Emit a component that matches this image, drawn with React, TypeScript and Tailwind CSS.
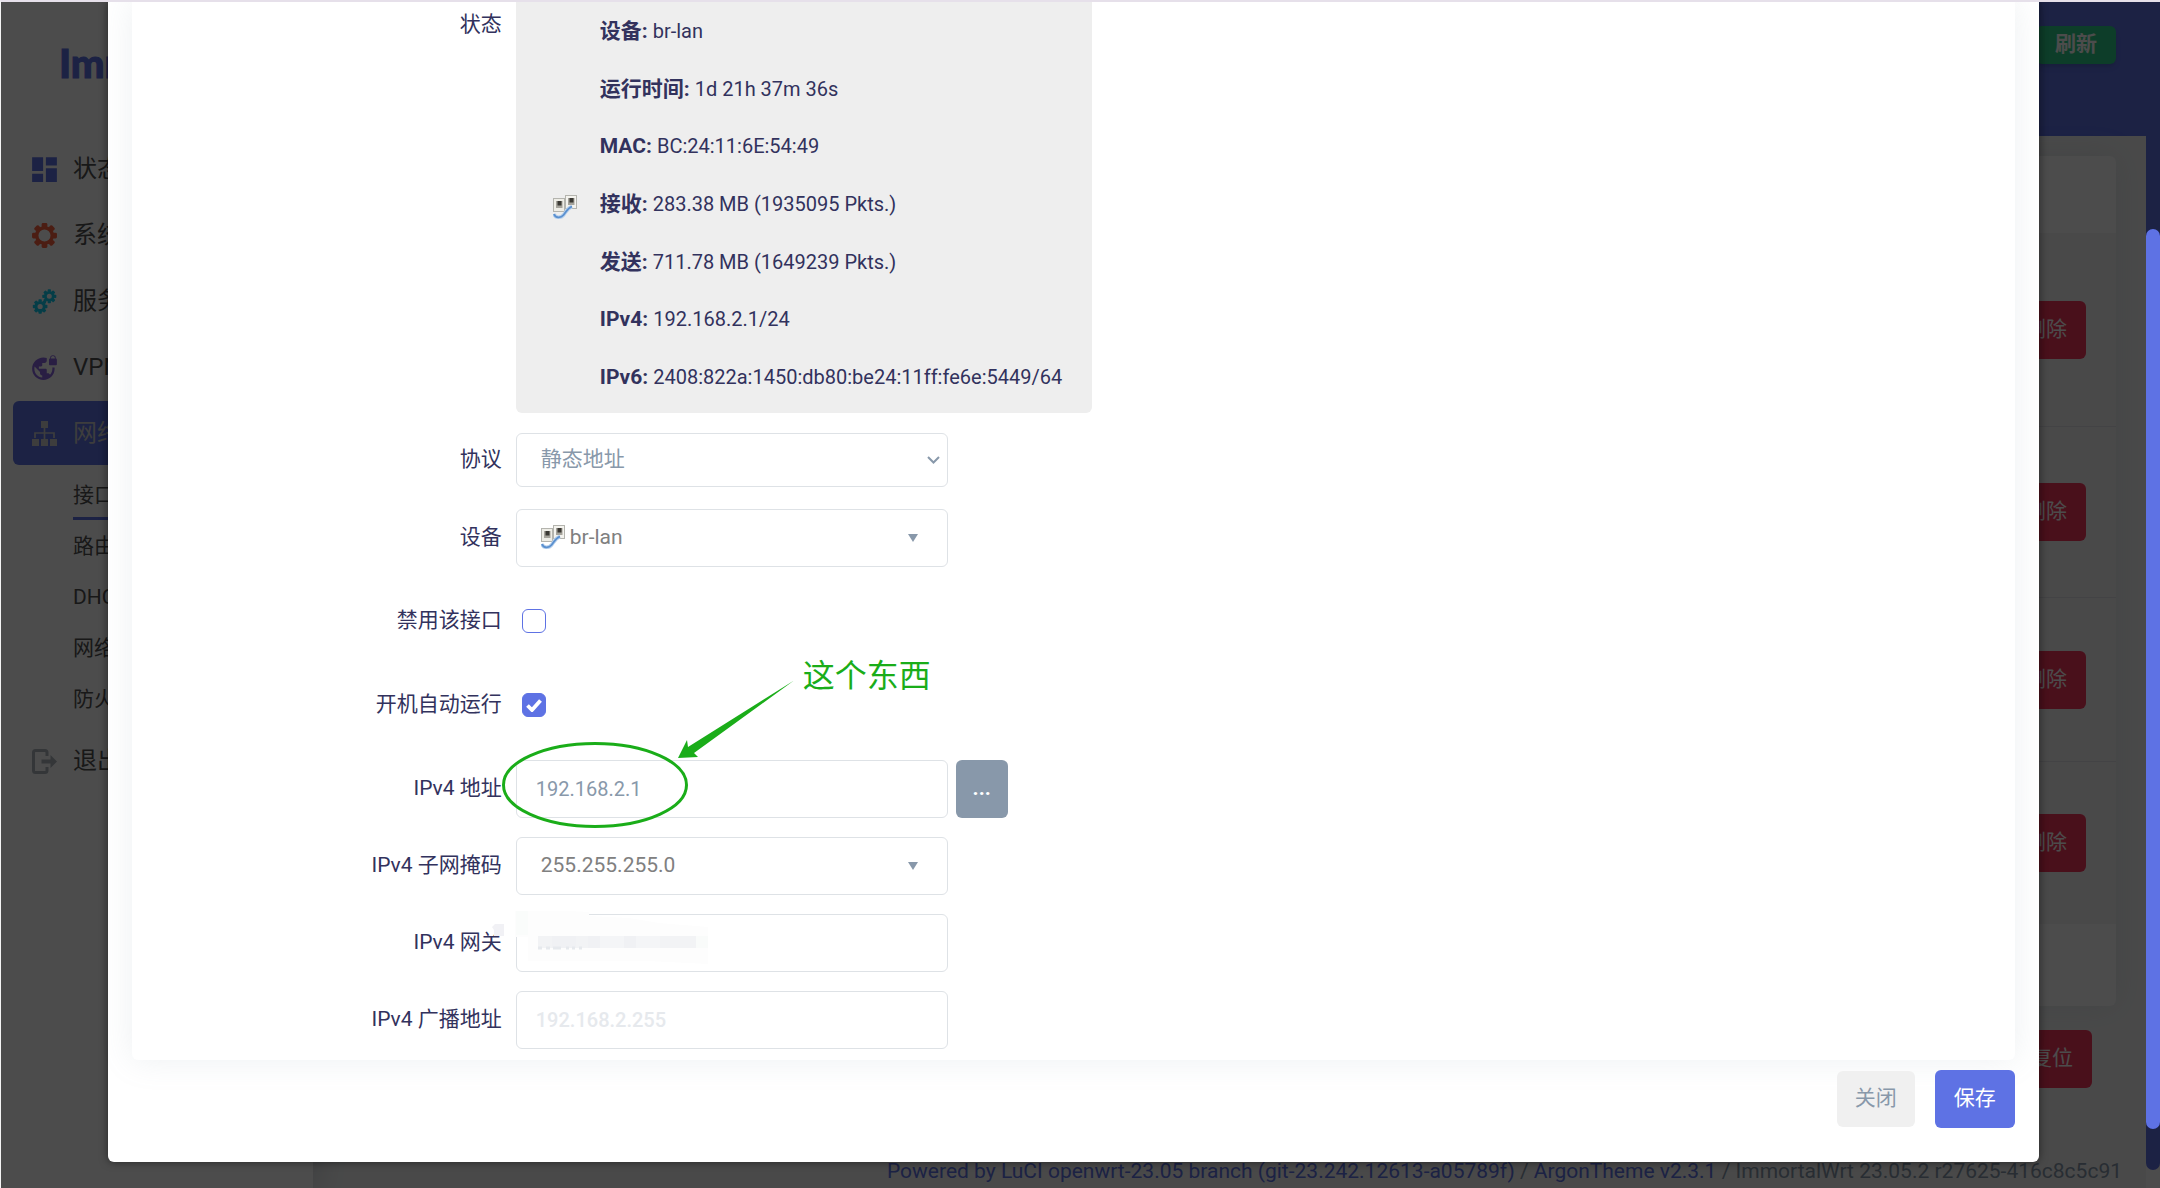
import type { ReactNode } from "react";
import { MdDashboard, MdVpnLock } from "react-icons/md";

const fieldBox =
  "flex items-center w-[432px] rounded-md border border-[#dee2e6] bg-white text-[#8898aa] outline-none";

function Gear({ cx = 12, cy = 12, r = 8, hole = 5 }: { cx?: number; cy?: number; r?: number; hole?: number }) {
  const teeth = [0, 45, 90, 135, 180, 225, 270, 315];
  const half = r * 0.3;
  return (
    <g transform={`translate(${cx} ${cy})`}>
      <circle r={(r + hole) / 2} fill="none" stroke="currentColor" strokeWidth={r - hole} />
      {teeth.map((deg) => (
        <rect
          key={deg}
          x={-half}
          y={-r * 1.3}
          width={half * 2}
          height={r * 0.45}
          rx={r * 0.14}
          fill="currentColor"
          transform={`rotate(${deg})`}
        />
      ))}
    </g>
  );
}

function SystemIcon() {
  return (
    <svg viewBox="0 0 24 24" className="size-[25px]">
      <Gear r={9.2} hole={5.8} />
    </svg>
  );
}

function ServicesIcon() {
  return (
    <svg viewBox="0 0 24 24" className="size-[25px]">
      <Gear cx={16.6} cy={7} r={5.2} hole={2.4} />
      <Gear cx={7.8} cy={16.8} r={5.4} hole={2.5} />
    </svg>
  );
}

function NetworkIcon() {
  return (
    <svg viewBox="0 0 25 25" className="size-[25px]" fill="currentColor">
      <path d="M9 0h7v7H9zM0 18h7v7H0zM9 18h7v7H9zM18 18h7v7h-7z" />
      <path d="M12.5 7v11M3 17v-5h19v5" fill="none" stroke="currentColor" strokeWidth="1.7" />
    </svg>
  );
}

function LogoutIcon() {
  return (
    <svg viewBox="0 0 25 25" className="size-[25px]">
      <path
        d="M15 7V3.500Q15 1.500 13 1.500H3.500Q1.500 1.500 1.500 3.500V21.500Q1.500 23.500 3.500 23.500H13Q15 23.500 15 21.500V18"
        fill="none"
        stroke="currentColor"
        strokeWidth="3"
      />
      <path d="M9.500 10.500h9V6l6.500 6.500-6.500 6.500v-4.500h-9z" fill="currentColor" />
    </svg>
  );
}

// Two wall sockets joined by a patch cable
function BridgeIcon() {
  return (
    <svg viewBox="0 0 24 24" className="mb-[2px] size-6 shrink-0">
      <rect x="0.500" y="3.500" width="11" height="13" fill="#eeede6" stroke="#b4b4ae" />
      <rect x="12.500" y="0.500" width="11" height="13" fill="#f4f3ee" stroke="#b4b4ae" />
      <path d="M3 6h6.500v7H3zM15 3h6.500v7H15z" fill="#a5a39b" />
      <path d="M4.500 6h4v4.500h-4zM16.500 3h4v4.500h-4z" fill="#3a3833" />
      <path d="M1 19c1.500 4.500 7 4 9.500 1 2.500-3 4-7 8.500-8.500" fill="none" stroke="#b5cfec" strokeWidth="3.600" />
      <path d="M1 19c1.500 4.500 7 4 9.500 1 2.500-3 4-7 8.500-8.500" fill="none" stroke="#5b90cf" strokeWidth="1.800" />
    </svg>
  );
}

function Caret() {
  return (
    <svg viewBox="0 0 10 8" className="pointer-events-none mr-[29px] h-2 w-[10px] shrink-0">
      <path d="M0 0h10L5 8z" fill="#8898aa" />
    </svg>
  );
}

const menu = [
  { label: "状态", color: "text-[#5e72e4]", icon: <MdDashboard size={33} className="-m-1 shrink-0" /> },
  { label: "系统", color: "text-[#fb6340]", icon: <SystemIcon /> },
  { label: "服务", color: "text-[#11cdef]", icon: <ServicesIcon /> },
  { label: "VPN", color: "text-[#8965e0]", icon: <MdVpnLock size={27} className="-m-px" /> },
  { label: "网络", color: "text-[#cccccc]", icon: <NetworkIcon />, active: true },
];

const submenu = ["接口", "路由", "DHCP/DNS", "网络诊断", "防火墙"];

function MenuItem({ label, color, icon, active }: { label: string; color: string; icon: ReactNode; active?: boolean }) {
  return (
    <a
      href="#"
      className={`flex h-16 items-center rounded-md pl-[19px] text-2xl ${active ? "bg-[#5e72e4] text-[#cccccc]" : "text-[#525252]"}`}
    >
      <span className={`flex w-[41px] items-center ${color}`}>{icon}</span>
      {label}
    </a>
  );
}

function Sidebar() {
  return (
    <aside className="z-10 w-[312px] shrink-0 bg-white px-3 shadow-[0_0_32px_rgba(80,90,110,0.3)]">
      <h1 className="flex h-[135px] items-start pt-9 pl-[46px] font-[Lato] text-[40px] leading-[50px] font-black text-[#5e72e4] [-webkit-text-stroke:1px_#5e72e4]">
        ImmortalWrt
      </h1>
      <nav className="flex flex-col gap-[2px]">
        {menu.map((m) => (
          <MenuItem key={m.label} {...m} />
        ))}
        <ul className="mt-[2px] mb-[3px] pl-[60px]">
          {submenu.map((s, i) => (
            <li key={s}>
              <a
                href="#"
                className={`flex h-[51px] items-center border-b-3 pt-[5px] text-[21px] text-[#525252] ${i === 0 ? "border-[#5e72e4]" : "border-transparent"}`}
              >
                {s}
              </a>
            </li>
          ))}
        </ul>
        <MenuItem label="退出" color="text-[#adb5bd]" icon={<LogoutIcon />} />
      </nav>
    </aside>
  );
}

function DeleteRow({ height }: { height: string }) {
  return (
    <div className={`flex items-center justify-end border-b border-[#dfe2e8] pr-[30px] last:border-transparent ${height}`}>
      <button className="h-[58px] rounded-md bg-[#f5365c] px-[19px] text-[21px] text-white">删除</button>
    </div>
  );
}

function Page() {
  return (
    <main className="flex min-w-0 flex-1 flex-col bg-[#f4f5f5]">
      <header className="flex h-[134px] shrink-0 items-start justify-end bg-[#5e72e4] pt-6 pr-[30px]">
        <button className="h-[38px] rounded-md bg-[#2dce89] px-[19px] text-[21px] font-bold text-white shadow-md">刷新</button>
      </header>
      <section className="mx-[30px] mt-5 rounded-md bg-[#fdfdfd] shadow-[0_0_32px_rgba(136,152,170,0.15)]">
        <div className="h-[77px]" />
        <div className="bg-[#f4f5f5]">
          <DeleteRow height="h-[194px]" />
          <DeleteRow height="h-[171px]" />
          <DeleteRow height="h-[164px]" />
          <DeleteRow height="h-[162px]" />
        </div>
        <div className="h-[82px]" />
      </section>
      <div className="mt-6 flex justify-end pr-[54px]">
        <button className="h-[58px] rounded-md bg-[#f5365c] px-[19px] text-[21px] text-white">复位</button>
      </div>
      <footer className="mt-[67px] pr-[24px] text-right text-[21px] leading-8 whitespace-nowrap text-[#8898aa]">
        <a href="#" className="text-[#5e72e4]">Powered by LuCI openwrt-23.05 branch (git-23.242.12613-a05789f)</a> /{" "}
        <a href="#" className="text-[#5e72e4]">ArgonTheme v2.3.1</a> / ImmortalWrt 23.05.2 r27625-416c8c5c91
      </footer>
    </main>
  );
}

function Row({ label, id, children, className = "h-[58px] items-center" }: { label: string; id?: string; children: ReactNode; className?: string }) {
  return (
    <div className={`flex ${className}`}>
      <label htmlFor={id} className="w-1/5 pr-[7px] pb-[3px] text-right text-[21px] leading-8">
        {label}
      </label>
      <div className="relative ml-[7px] flex items-center gap-2">{children}</div>
    </div>
  );
}

const stats = [
  ["设备", "br-lan"],
  ["运行时间", "1d 21h 37m 36s"],
  ["MAC", "BC:24:11:6E:54:49"],
  ["接收", "283.38 MB (1935095 Pkts.)"],
  ["发送", "711.78 MB (1649239 Pkts.)"],
  ["IPv4", "192.168.2.1/24"],
  ["IPv6", "2408:822a:1450:db80:be24:11ff:fe6e:5449/64"],
];

function StatusBox() {
  return (
    <div className="flex h-[411px] w-[576px] items-center gap-[23px] rounded-b-md bg-[#eeeeee] pl-[37px]">
      <BridgeIcon />
      <dl className="flex h-full flex-col justify-between pt-[13px] pb-5 text-[21px] leading-8 whitespace-nowrap">
        {stats.map(([k, v]) => (
          <div key={k} className="flex items-baseline gap-[5px]">
            <dt className="font-bold">{k}:</dt>
            <dd className="text-[20px]">{v}</dd>
          </div>
        ))}
      </dl>
    </div>
  );
}

// Hand-drawn note: ring round the address, arrow and caption
function Annotation() {
  return (
    <div className="pointer-events-none absolute -top-[88px] -left-4 flex w-[440px] text-[#1aad19]">
      <svg viewBox="0 0 303 160" className="h-40 w-[303px] shrink-0">
        <ellipse cx="95" cy="113" rx="91.500" ry="41.500" fill="none" stroke="currentColor" strokeWidth="3" />
        <path d="M294 8.500L194 81L198 85L178 86L187 68L188 75Z" fill="currentColor" />
      </svg>
      <span className="-mt-5 text-[32px] leading-[48px] whitespace-nowrap">这个东西</span>
    </div>
  );
}

// Pixelated patch that hides the gateway address
function Mosaic() {
  return (
    <svg viewBox="0 0 220 64" className="pointer-events-none absolute -top-1 -left-6 h-16 w-[220px]">
      <path d="M0 17l3-3h9v12H2v-6z" fill="#f1f1f5" />
      <path d="M23 1h55l19 1v4l40 2 30 5 49 4v37l-60-3H36V27H23z" fill="#fdfdfd" />
      <path d="M24 1h12v24H24z" fill="#fafcfb" />
      <path d="M46 26h14v12H46zM84 26h12v12H84zM168 26h36v12h-36z" fill="#f2f3f5" />
      <path d="M60 26h24v12H60zM96 26h12v12H96zM132 26h12v12h-12z" fill="#f0f1f4" />
      <path d="M108 26h24v12h-24zM144 26h24v12h-24z" fill="#f4f5f7" />
      <path d="M204 26h12v12h-12z" fill="#f9fbfa" />
      <path d="M46 38h4M54 38h4M61 38h8M74 38h3M80 38h3M87 38h3" stroke="#e6e9ed" strokeWidth="3" />
    </svg>
  );
}

function Checkbox({ id, defaultChecked }: { id: string; defaultChecked?: boolean }) {
  return (
    <span className="ml-[6px] grid size-6 place-items-center">
      <input
        id={id}
        type="checkbox"
        defaultChecked={defaultChecked}
        className="peer col-start-1 row-start-1 size-6 appearance-none rounded-md border border-[#5e72e4] bg-white checked:bg-[#5e72e4]"
      />
      <svg viewBox="0 0 16 13" className="pointer-events-none col-start-1 row-start-1 hidden h-[13px] w-4 peer-checked:block">
        <path d="M1.500 6.500l4.500 4.500L14.500 1.500" fill="none" stroke="white" strokeWidth="3.800" />
      </svg>
    </span>
  );
}

function InterfaceForm() {
  return (
    <form className="rounded-b-md pb-[11px] shadow-[0_0_32px_rgba(136,152,170,0.15)]">
      <Row label="状态" className="h-[411px] items-start [&>label]:pt-[6px]">
        <StatusBox />
      </Row>
      <Row label="协议" id="proto" className="mt-5 h-[54px] items-center">
        <div className={`${fieldBox} h-[54px] text-[21px]`}>
          <select id="proto" className="h-full flex-1 appearance-none pl-6 outline-none">
            <option>静态地址</option>
          </select>
          <svg viewBox="0 0 13 8" className="pointer-events-none mr-[7px] h-2 w-[13px] shrink-0">
            <path d="M1 1l5.500 5.500L12 1" fill="none" stroke="#8898aa" strokeWidth="2" />
          </svg>
        </div>
      </Row>
      <Row label="设备" id="device" className="mt-[22px] h-[58px] items-center">
        <div className={`${fieldBox} h-[58px] pl-6 text-[21px]`}>
          <BridgeIcon />
          <select id="device" className="h-full flex-1 appearance-none pl-[5px] text-[#808080] outline-none">
            <option>br-lan</option>
          </select>
          <Caret />
        </div>
      </Row>
      <div className="my-3">
        <Row label="禁用该接口" id="disabled" className="h-[84px] items-center">
          <Checkbox id="disabled" />
        </Row>
        <Row label="开机自动运行" id="auto" className="h-[84px] items-center">
          <Checkbox id="auto" defaultChecked />
        </Row>
      </div>
      <div className="flex flex-col gap-[19px] pt-px">
        <Row label="IPv4 地址" id="ipaddr">
          <input id="ipaddr" defaultValue="192.168.2.1" className={`${fieldBox} h-[58px] px-[19px] text-[20px]`} />
          <button type="button" className="h-[58px] w-[52px] rounded-md bg-[#8898aa] text-[21px] font-bold text-white">
            ...
          </button>
          <Annotation />
        </Row>
        <Row label="IPv4 子网掩码" id="netmask">
          <div className={`${fieldBox} h-[58px] text-[21px]`}>
            <select id="netmask" className="h-full flex-1 appearance-none pl-6 text-[#808080] outline-none">
              <option>255.255.255.0</option>
            </select>
            <Caret />
          </div>
        </Row>
        <Row label="IPv4 网关" id="gateway">
          <input id="gateway" className={`${fieldBox} h-[58px] px-[19px] text-[20px]`} />
          <Mosaic />
        </Row>
        <Row label="IPv4 广播地址" id="broadcast">
          <input
            id="broadcast"
            placeholder="192.168.2.255"
            className={`${fieldBox} h-[58px] px-[19px] text-[20px] placeholder:font-medium placeholder:text-[#e6e9ed]`}
          />
        </Row>
      </div>
    </form>
  );
}

export default function App() {
  return (
    <div className="relative h-screen overflow-hidden border-t-2 border-l border-t-[#e6e0ea] border-l-[#f4f4f4] font-[Roboto,'Noto_Sans_CJK_SC',sans-serif] text-[#32325d]">
      <div className="flex h-full">
        <Sidebar />
        <Page />
        <div className="mb-[18px] w-[14px] shrink-0 rounded-b-full bg-[#5e72e4]" />
      </div>
      <div className="absolute inset-0 z-20 flex bg-black/70">
        <div className="flex-1">
          <div role="dialog" aria-modal="true" className="mx-auto w-9/10 rounded-b-md bg-white px-6 pb-[34px] shadow-[0_0_8px_rgba(0,0,0,0.5)]">
            <InterfaceForm />
            <div className="mt-[10px] flex items-center justify-end gap-5">
              <button className="h-14 w-[78px] rounded-md bg-[#f0f0f0] text-[21px] text-[#8898aa]">关闭</button>
              <button className="h-[58px] w-20 rounded-md bg-[#5e72e4] text-[21px] text-white">保存</button>
            </div>
          </div>
        </div>
        <div className="mt-[227px] mb-[59px] w-[14px] shrink-0 rounded-full bg-[#5e72e4]" />
      </div>
    </div>
  );
}
